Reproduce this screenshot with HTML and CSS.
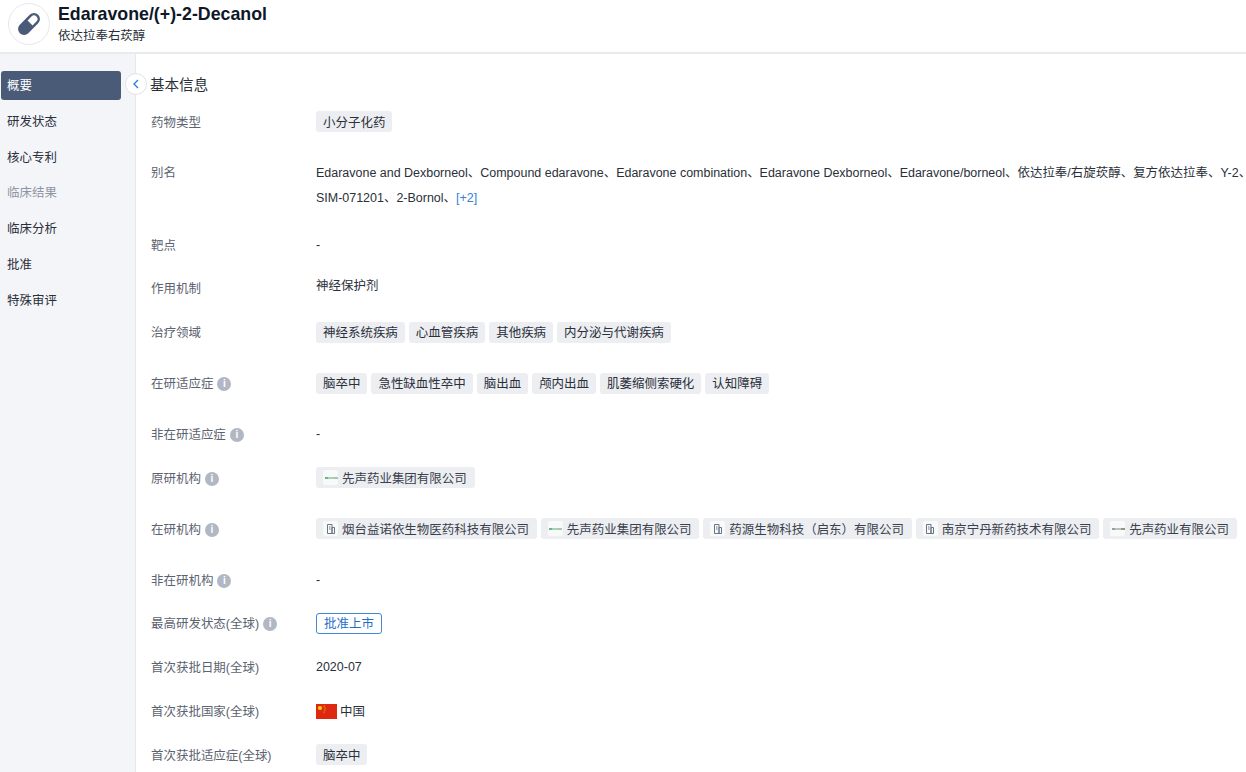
FILE: index.html
```html
<!DOCTYPE html>
<html lang="zh">
<head>
<meta charset="utf-8">
<title>Edaravone/(+)-2-Decanol</title>
<link rel="stylesheet" href="styles.css">
</head>
<body>
<header class="top">
  <div class="logo">
    <svg width="30" height="30" viewBox="0 0 30 30"><g transform="rotate(-45 15 15)"><rect x="2" y="9" width="26" height="12" rx="6" fill="#4a5b78"/><path d="M16.500 11.500h5.500a3.500 3.500 0 0 1 0 7h-5.500z" fill="#fff"/></g></svg>
  </div>
  <div class="heading">
    <div class="title">Edaravone/(+)-2-Decanol</div>
    <div class="subtitle">依达拉奉右莰醇</div>
  </div>
</header>
<div class="page">
  <nav class="side">
    <a class="nav active">概要</a>
    <a class="nav">研发状态</a>
    <a class="nav">核心专利</a>
    <a class="nav muted">临床结果</a>
    <a class="nav">临床分析</a>
    <a class="nav">批准</a>
    <a class="nav">特殊审评</a>
    <button class="toggle"><svg width="8" height="10" viewBox="0 0 8 10"><path d="M6 1 L2 5 L6 9" fill="none" stroke="#2f7fd8" stroke-width="1.4"/></svg></button>
  </nav>
  <main class="main">
    <h2 class="section">基本信息</h2>
    <div class="row"><div class="label">药物类型</div><div class="val"><span class="tag">小分子化药</span></div></div>
    <div class="row alias"><div class="label">别名</div><div class="val text">Edaravone and Dexborneol、Compound edaravone、Edaravone combination、Edaravone Dexborneol、Edaravone/borneol、依达拉奉/右旋莰醇、复方依达拉奉、Y-2、SIM-071201、2-Bornol、<span class="more">[+2]</span></div></div>
    <div class="row"><div class="label">靶点</div><div class="val">-</div></div>
    <div class="row"><div class="label">作用机制</div><div class="val plain">神经保护剂</div></div>
    <div class="row"><div class="label">治疗领域</div><div class="val"><span class="tag">神经系统疾病</span><span class="tag">心血管疾病</span><span class="tag">其他疾病</span><span class="tag">内分泌与代谢疾病</span></div></div>
    <div class="row tall"><div class="label">在研适应症<i class="info">i</i></div><div class="val"><span class="tag">脑卒中</span><span class="tag">急性缺血性卒中</span><span class="tag">脑出血</span><span class="tag">颅内出血</span><span class="tag">肌萎缩侧索硬化</span><span class="tag">认知障碍</span></div></div>
    <div class="row"><div class="label">非在研适应症<i class="info">i</i></div><div class="val">-</div></div>
    <div class="row"><div class="label">原研机构<i class="info">i</i></div><div class="val"><span class="tag org"><span class="mark"><svg width="14" height="6" viewBox="0 0 14 6"><path d="M1 3h3" stroke="#35a063" stroke-width="1.6"/><path d="M4 3h6" stroke="#5aa877" stroke-width="1"/><path d="M10 3h4" stroke="#8fb09c" stroke-width="1.6"/></svg></span>先声药业集团有限公司</span></div></div>
    <div class="row tall"><div class="label">在研机构<i class="info">i</i></div><div class="val nowrap">
      <span class="tag org"><span class="mark"><svg width="12" height="12" viewBox="0 0 12 12"><path d="M2.500 1.500h4.500v9h-4.500zM7 4.500h2.500v6h-2.500zM4 4h1.500M4 6h1.500" fill="none" stroke="#6b7585" stroke-width="1"/></svg></span>烟台益诺依生物医药科技有限公司</span><span class="tag org"><span class="mark"><svg width="14" height="6" viewBox="0 0 14 6"><path d="M1 3h3" stroke="#35a063" stroke-width="1.6"/><path d="M4 3h6" stroke="#5aa877" stroke-width="1"/><path d="M10 3h4" stroke="#8fb09c" stroke-width="1.6"/></svg></span>先声药业集团有限公司</span><span class="tag org"><span class="mark"><svg width="12" height="12" viewBox="0 0 12 12"><path d="M2.500 1.500h4.500v9h-4.500zM7 4.500h2.500v6h-2.500zM4 4h1.500M4 6h1.500" fill="none" stroke="#6b7585" stroke-width="1"/></svg></span>药源生物科技（启东）有限公司</span><span class="tag org"><span class="mark"><svg width="12" height="12" viewBox="0 0 12 12"><path d="M2.500 1.500h4.500v9h-4.500zM7 4.500h2.500v6h-2.500zM4 4h1.500M4 6h1.500" fill="none" stroke="#6b7585" stroke-width="1"/></svg></span>南京宁丹新药技术有限公司</span><span class="tag org"><span class="mark"><svg width="14" height="6" viewBox="0 0 14 6"><path d="M1 3h3" stroke="#6f8a78" stroke-width="1.600"/><path d="M4 3h6" stroke="#7f8d84" stroke-width="1"/><path d="M10 3h4" stroke="#6b7569" stroke-width="1.600"/></svg></span>先声药业有限公司</span></div></div>
    <div class="row"><div class="label">非在研机构<i class="info">i</i></div><div class="val">-</div></div>
    <div class="row"><div class="label">最高研发状态(全球)<i class="info">i</i></div><div class="val"><span class="status">批准上市</span></div></div>
    <div class="row"><div class="label">首次获批日期(全球)</div><div class="val">2020-07</div></div>
    <div class="row"><div class="label">首次获批国家(全球)</div><div class="val"><svg class="flag" width="21" height="15" viewBox="0 0 21 15"><rect width="21" height="15" fill="#de2910"/><circle cx="4" cy="4" r="2" fill="#ffde00"/><circle cx="8" cy="2" r=".6" fill="#ffde00"/><circle cx="9" cy="4" r=".6" fill="#ffde00"/><circle cx="9" cy="6" r=".6" fill="#ffde00"/><circle cx="8" cy="8" r=".6" fill="#ffde00"/></svg>中国</div></div>
    <div class="row"><div class="label">首次获批适应症(全球)</div><div class="val"><span class="tag">脑卒中</span></div></div>
  </main>
</div>
</body>
</html>
```
FILE: styles.css
```css
* { box-sizing: border-box; }
html, body { margin: 0; padding: 0; height: 100%; overflow: hidden; background: #fff; }
body { font-family: "Liberation Sans", "Noto Sans CJK SC", sans-serif; font-size: 12.48px; color: #2a2f3a; }
.top { height: 54px; display: flex; align-items: flex-start; padding: 3px 0 0 8px; border-bottom: 2px solid #e9eaec; }
.logo { width: 42px; height: 42px; border: 1px solid #e6e8ec; border-radius: 50%; display: flex; align-items: center; justify-content: center; }
.heading { margin-left: 8px; }
.title { font-size: 17.8px; font-weight: 700; line-height: 22px; color: #0f1729; }
.subtitle { font-size: 12.48px; line-height: 17px; margin-top: 3px; color: #2a2f3a; }
.page { display: flex; height: 718px; }
.side { position: relative; width: 136px; flex: none; background: #f4f5f8; border-right: 1px solid #e6e8ec; padding: 17px 0 0 1px; }
.nav { display: flex; align-items: center; width: 120px; height: 29px; margin-bottom: 6.8px; padding: 0 0 1px 6px; border-radius: 3px; color: #2a2f3a; }
.nav.active { background: #4a5b78; color: #fff; }
.nav.muted { color: #8f96a3; }
.toggle { position: absolute; top: 19px; left: 125px; width: 22px; height: 22px; padding: 0; border: 1px solid #dfe3ea; border-radius: 50%; background: #fff; display: flex; align-items: center; justify-content: center; }
.main { flex: 1; min-width: 0; padding: 20px 0 0 14px; overflow: hidden; }
.section { margin: 0; font-size: 14.56px; font-weight: 400; line-height: 22px; height: 26.500px; color: #2a2f3a; }
.row { display: flex; align-items: center; height: 43.85px; padding-left: 1px; }
.row.tall { height: 57.85px; }
.row.alias { height: 78.85px; align-items: flex-start; padding-top: 16.5px; }
.label { width: 165px; flex: none; display: flex; align-items: center; margin-top: 1px; color: #5c6370; line-height: 20px; }
.alias .label { margin-top: 0; line-height: 25px; }
.val { flex: 1; min-width: 0; display: flex; flex-wrap: wrap; align-items: center; gap: 4px; margin-bottom: 1px; color: #2a2f3a; }
.val.nowrap { flex-wrap: nowrap; white-space: nowrap; }
.val.text { display: block; line-height: 25px; margin-bottom: 0; width: 942px; flex: none; }
.val.plain { margin-top: -6px; }
.more { color: #2f7fd8; }
.tag { display: inline-flex; align-items: center; height: 21px; padding: 0 7px; background: #eceef1; border-radius: 3px; color: #2a2f3a; white-space: nowrap; }
.tag.org { padding: 0 7.8px 0 7px; color: #3a404c; }
.mark { width: 15px; height: 15px; margin-right: 4px; border-radius: 2px; background: #f8f9f9; display: inline-flex; align-items: center; justify-content: center; overflow: hidden; }
.info { width: 14px; height: 14px; margin-left: 4px; border-radius: 50%; background: #b1b7c3; color: #fff; font-size: 10px; font-weight: 700; font-style: normal; line-height: 14px; text-align: center; }
.status { display: inline-flex; align-items: center; height: 21px; padding: 0 7px; border: 1px solid #3f8ad8; border-radius: 3px; color: #1f6fc9; }
.flag { margin-right: -1px; }
```
